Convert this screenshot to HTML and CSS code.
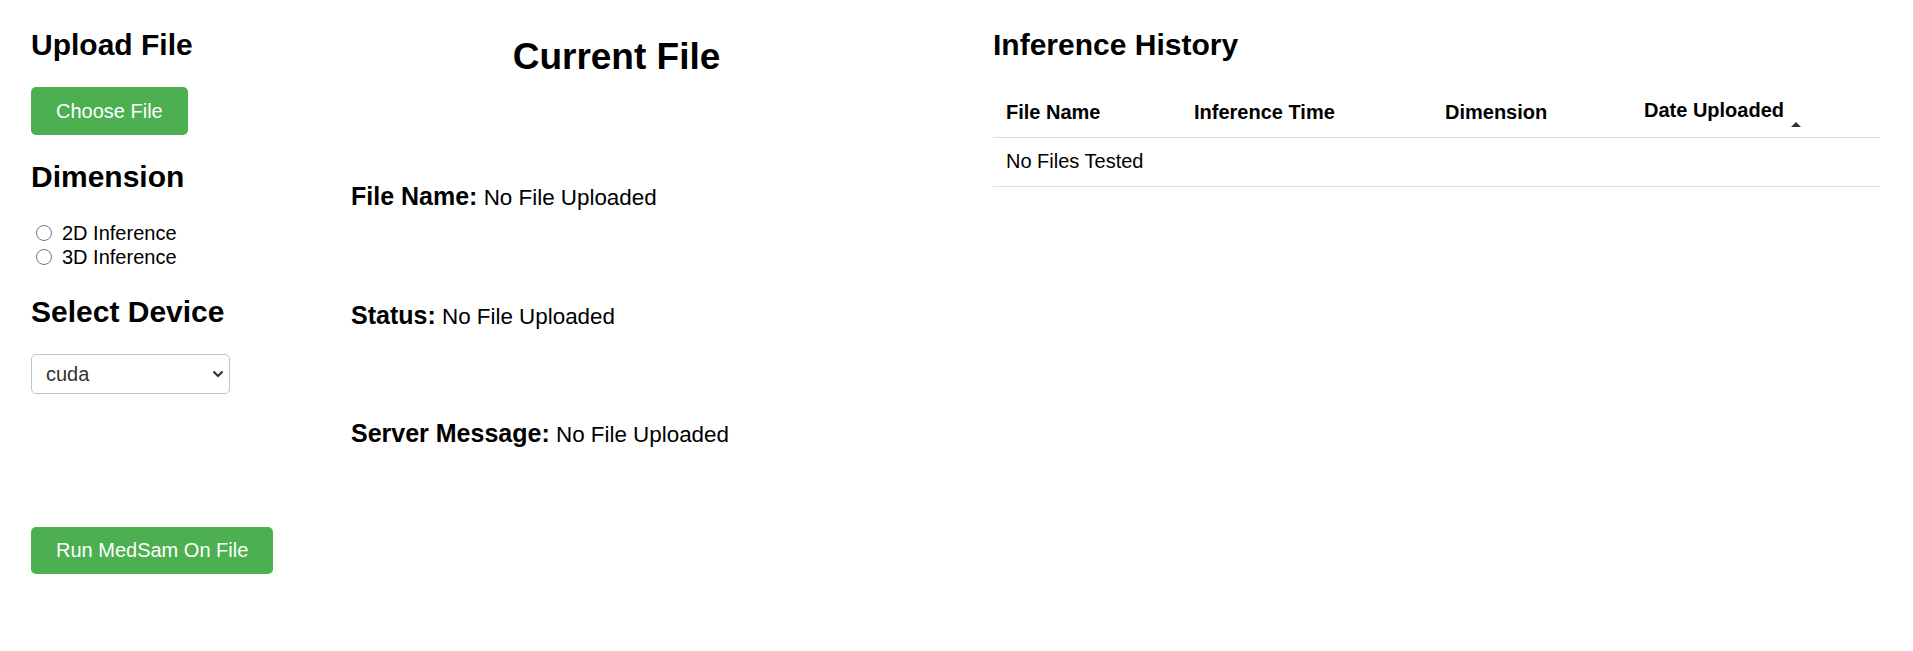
FILE: index.html
```html
<!DOCTYPE html>
<html lang="en">
<head>
<meta charset="utf-8">
<title>MedSam Inference</title>
<link rel="stylesheet" href="styles.css">
</head>
<body>
<div class="page">
  <section class="col-upload">
    <h2 class="heading">Upload File</h2>
    <button class="btn btn-choose">Choose File</button>
    <h2 class="heading">Dimension</h2>
    <div class="radios">
      <label class="radio-row"><input class="radio" type="radio" name="dim">2D Inference</label>
      <label class="radio-row"><input class="radio" type="radio" name="dim">3D Inference</label>
    </div>
    <h2 class="heading">Select Device</h2>
    <div class="select-wrap">
      <select class="device"><option>cuda</option><option>cpu</option></select>
      <svg class="chev" width="12" height="8" viewBox="0 0 12 8"><path d="M1.5 1.5 L6 6 L10.5 1.5" fill="none" stroke="#333" stroke-width="2.2"/></svg>
    </div>
    <button class="btn btn-run">Run MedSam On File</button>
  </section>

  <section class="col-current">
    <h1 class="current-title">Current File</h1>
    <div class="info-list">
      <h3 class="info"><strong class="label">File Name:</strong> <span class="val">No File Uploaded</span></h3>
      <h3 class="info"><strong class="label">Status:</strong> <span class="val">No File Uploaded</span></h3>
      <h3 class="info"><strong class="label">Server Message:</strong> <span class="val">No File Uploaded</span></h3>
    </div>
  </section>

  <section class="col-history">
    <h2 class="heading">Inference History</h2>
    <table class="history">
      <thead>
        <tr>
          <th class="c1">File Name</th>
          <th class="c2">Inference Time</th>
          <th class="c3">Dimension</th>
          <th class="c4">Date Uploaded<span class="sort"></span></th>
        </tr>
      </thead>
      <tbody>
        <tr><td colspan="4">No Files Tested</td></tr>
      </tbody>
    </table>
  </section>
</div>
</body>
</html>
```
FILE: styles.css
```css
body {
  margin: 0;
  background: #fff;
  color: #000;
  font-family: "Liberation Sans", Arial, sans-serif;
}

.page {
  display: flex;
  align-items: flex-start;
  padding: 28px 33px 0 31px;
}

.col-upload {
  flex: none;
  width: 320px;
}

.heading {
  margin: 0 0 24.5px;
  font-size: 30px;
  line-height: 34.5px;
  font-weight: bold;
}

.btn {
  display: block;
  height: 48px;
  padding: 0 25px;
  border: none;
  border-radius: 5px;
  background: #4caf50;
  color: #fff;
  font-family: "Liberation Sans", Arial, sans-serif;
  font-size: 20px;
  cursor: pointer;
}

.btn-choose {
  margin-bottom: 24.5px;
}

.btn-run {
  margin-top: 133px;
  height: 47px;
}

.radios {
  padding-top: 2px;
  margin-bottom: 26.5px;
}

.radio-row {
  display: flex;
  align-items: center;
  height: 24px;
  font-size: 20px;
  line-height: 24px;
}

.radio {
  width: 16px;
  height: 16px;
  margin: 0 10px 0 5px;
  accent-color: #555;
}

.select-wrap {
  position: relative;
  width: 199px;
  height: 40px;
}

.device {
  appearance: none;
  -webkit-appearance: none;
  width: 199px;
  height: 40px;
  padding: 0 0 0 14px;
  border: 1px solid #c4c4c4;
  border-radius: 5px;
  background: #fff;
  color: #333;
  font-family: "Liberation Sans", Arial, sans-serif;
  font-size: 20px;
}

.chev {
  position: absolute;
  right: 6px;
  top: 16px;
  pointer-events: none;
}

.col-current {
  flex: none;
  width: 531px;
  margin-right: 111px;
}

.current-title {
  margin: 7.5px 0 0;
  text-align: center;
  font-size: 37px;
  line-height: 42.5px;
  font-weight: bold;
}

.info-list {
  display: flex;
  flex-direction: column;
  gap: 90.6px;
  margin-top: 105px;
}

.info {
  margin: 0;
  font-size: 22.4px;
  line-height: 27px;
  font-weight: normal;
}

.info .label {
  font-size: 25px;
  font-weight: bold;
}

.col-history {
  flex: 1;
}

.col-history .heading {
  margin-bottom: 23.5px;
}

.history {
  width: 100%;
  border-collapse: collapse;
  table-layout: fixed;
  font-size: 20px;
  line-height: 23px;
}

.history th {
  text-align: left;
  font-weight: bold;
  padding: 12.5px 13px 10px;
  border-bottom: 1px solid #ddd;
  white-space: nowrap;
}

.history td {
  padding: 12.5px 13px;
  border-bottom: 1px solid #ddd;
}

.c1 { width: 162px; }
.c2 { width: 225px; }
.c3 { width: 173px; }

.sort {
  display: inline-block;
  width: 0;
  height: 0;
  margin-left: 7px;
  border-left: 5.5px solid transparent;
  border-right: 5.5px solid transparent;
  border-bottom: 5.5px solid #333;
  vertical-align: -10px;
}
```
